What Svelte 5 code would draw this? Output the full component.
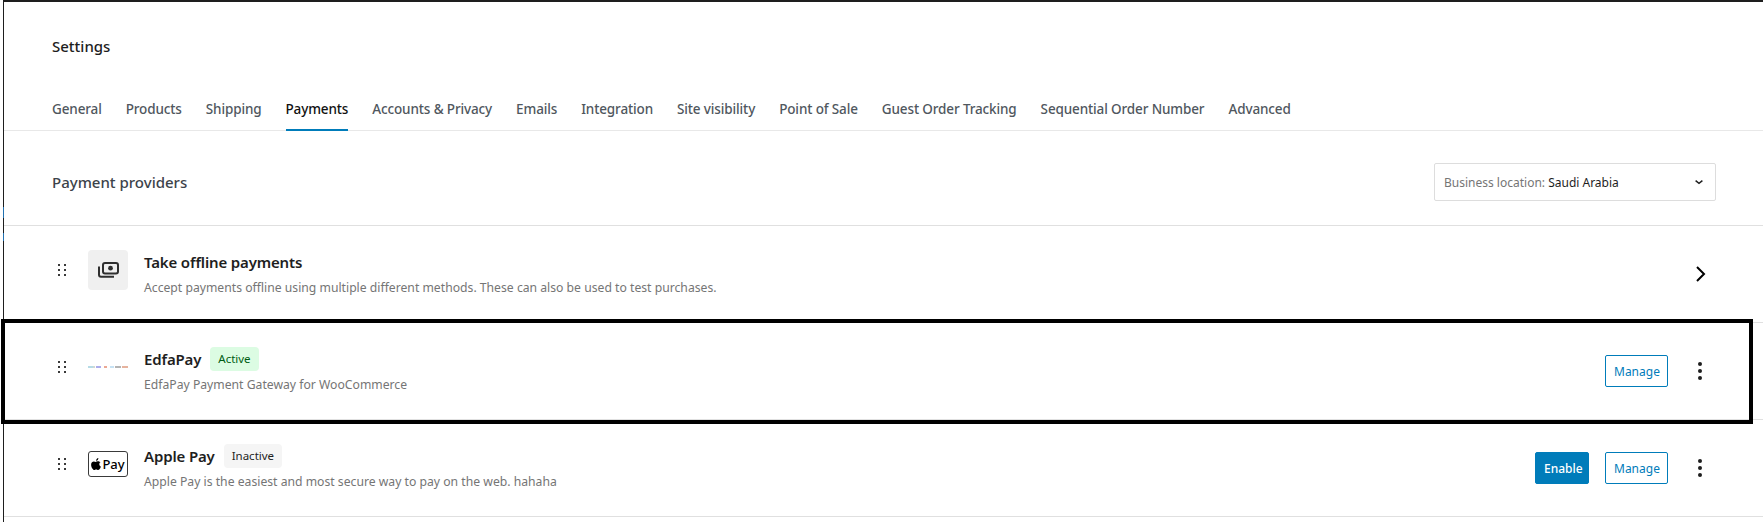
<script>
  const tabs = [
    'General', 'Products', 'Shipping', 'Payments', 'Accounts & Privacy', 'Emails',
    'Integration', 'Site visibility', 'Point of Sale', 'Guest Order Tracking',
    'Sequential Order Number', 'Advanced',
  ]
  const active = 'Payments'
  const edfaDashes = [
    ['#8fc7d8', 5], ['#b9c4b8', 2], ['transparent', 1], ['#7f7fe0', 5], ['transparent', 3],
    ['#e07a5a', 3], ['transparent', 3], ['#a9d2ee', 4], ['transparent', 1], ['#8c8c8c', 6],
    ['transparent', 1], ['#d98a6a', 6],
  ]
</script>

{#snippet handle()}
  <svg class="handle" width="20" height="20" viewBox="0 0 20 20" fill="#3a3a3a">
    <rect x="6" y="4" width="2" height="2" /><rect x="12" y="4" width="2" height="2" />
    <rect x="6" y="9" width="2" height="2" /><rect x="12" y="9" width="2" height="2" />
    <rect x="6" y="14" width="2" height="2" /><rect x="12" y="14" width="2" height="2" />
  </svg>
{/snippet}

{#snippet kebab()}
  <button class="icon-btn" aria-label="More">
    <svg width="24" height="24" viewBox="0 0 24 24" fill="#1e1e1e">
      <circle cx="12" cy="5" r="2" /><circle cx="12" cy="12" r="2" /><circle cx="12" cy="19" r="2" />
    </svg>
  </button>
{/snippet}

<div class="page">
  <header class="header"><h1>Settings</h1></header>

  <nav class="tabs">
    {#each tabs as tab}
      <span class="tab" class:active={tab === active}>{tab}</span>
    {/each}
  </nav>

  <section class="providers-head">
    <h2>Payment providers</h2>
    <div class="select">
      <span><span class="label">Business location:</span> Saudi Arabia</span>
      <svg width="14" height="14" viewBox="0 0 14 14" fill="none" stroke="#1e1e1e" stroke-width="1.4">
        <path d="M3.6 5.6 7 8.4l3.4-2.8" />
      </svg>
    </div>
  </section>

  <div class="row">
    {@render handle()}
    <div class="logo offline">
      <svg width="24" height="24" viewBox="0 0 24 24" fill="none" stroke="#2f2f2f" stroke-width="2">
        <rect x="7" y="5" width="15" height="10.5" rx="2" />
        <circle cx="14.5" cy="10.2" r="2.4" fill="#2f2f2f" stroke="none" />
        <path d="M3 8.5v8.2c0 1.2.8 2 2 2h13" />
      </svg>
    </div>
    <div class="info">
      <div class="title"><strong>Take offline payments</strong></div>
      <p>Accept payments offline using multiple different methods. These can also be used to test purchases.</p>
    </div>
    <div class="actions">
      <span class="icon-btn">
        <svg width="24" height="24" viewBox="0 0 24 24" fill="none" stroke="#000" stroke-width="2">
          <path d="m9 5 7 7-7 7" />
        </svg>
      </span>
    </div>
  </div>

  <div class="row">
    {@render handle()}
    <div class="logo edfa">
      {#each edfaDashes as [color, w]}
        <i style="background: {color}; width: {w}px"></i>
      {/each}
    </div>
    <div class="info">
      <div class="title"><strong>EdfaPay</strong><span class="badge on">Active</span></div>
      <p>EdfaPay Payment Gateway for WooCommerce</p>
    </div>
    <div class="actions">
      <button class="btn outline">Manage</button>
      {@render kebab()}
    </div>
  </div>

  <div class="row">
    {@render handle()}
    <div class="logo">
      <div class="apple">
        <svg width="10" height="12" viewBox="0 0 814 1000" fill="#000">
          <path d="M788 341c-6 4-108 62-108 190 0 148 130 200 134 202-1 3-21 72-69 142-43 62-88 124-156 124s-86-40-165-40c-77 0-104 41-167 41s-106-57-156-128C43 788 0 670 0 558c0-180 117-275 232-275 61 0 112 40 150 40 37 0 94-43 164-43 27 0 122 3 185 61zM554 159c29-34 50-82 50-130 0-7-1-13-2-19-47 2-104 32-138 71-27 30-52 78-52 127 0 8 1 15 2 18 3 0 8 1 13 1 43 0 96-29 127-68z" />
        </svg>
        <span>Pay</span>
      </div>
    </div>
    <div class="info">
      <div class="title"><strong>Apple Pay</strong><span class="badge off">Inactive</span></div>
      <p>Apple Pay is the easiest and most secure way to pay on the web. hahaha</p>
    </div>
    <div class="actions">
      <button class="btn primary">Enable</button>
      <button class="btn outline">Manage</button>
      {@render kebab()}
    </div>
  </div>
</div>

<!-- annotation drawn over the screenshot -->
<div class="highlight"></div>
<div class="edge-blue one"></div>
<div class="edge-blue two"></div>

<style>
  :global(body) {
    margin: 0;
    background: #fff;
    overflow: hidden;
  }

  .page {
    box-sizing: border-box;
    height: 522px;
    margin-left: 3px;
    border-top: 2px solid #1e1e1e;
    border-left: 1px solid #1e1e1e;
    background: #fff;
    font-family: "Noto Sans", "Open Sans", sans-serif;
    color: #1e1e1e;
    overflow: hidden;
  }

  .header {
    height: 62px;
    padding: 24px 0 0 48px;
    box-sizing: border-box;
  }

  h1 {
    margin: 0;
    font-size: 15px;
    line-height: 40px;
    font-weight: 500;
    color: #1e1e1e;
  }

  .tabs {
    display: flex;
    gap: 24px;
    height: 67px;
    padding-left: 48px;
    box-sizing: border-box;
    border-bottom: 1px solid #e8e8e8;
  }

  .tab {
    box-sizing: border-box;
    height: 67px;
    padding-top: 35px;
    font-size: 13.5px;
    letter-spacing: -0.13px;
    line-height: 20px;
    font-weight: 500;
    color: #50575e;
  }

  .tab.active {
    color: #111;
    border-bottom: 2px solid #007cba;
  }

  .providers-head {
    display: flex;
    align-items: center;
    justify-content: space-between;
    box-sizing: border-box;
    height: 95px;
    padding: 8px 47px 0 48px;
    border-bottom: 1px solid #e0e0e0;
  }

  h2 {
    margin: 0;
    font-size: 15px;
    font-weight: 500;
    color: #3c434a;
  }

  .select {
    display: flex;
    align-items: center;
    justify-content: space-between;
    box-sizing: border-box;
    width: 282px;
    height: 38px;
    padding: 0 9px;
    border: 1px solid #ddd;
    border-radius: 2px;
    font-size: 12px;
    color: #1e1e1e;
  }

  .label {
    color: #757575;
  }

  .row {
    display: flex;
    align-items: flex-start;
    box-sizing: border-box;
    height: 97px;
    padding: 24px 47px 0 48px;
    border-bottom: 1px solid #e0e0e0;
  }

  .handle {
    margin-top: 10px;
    margin-right: 16px;
    flex-shrink: 0;
  }

  .logo {
    display: flex;
    align-items: center;
    justify-content: center;
    width: 40px;
    height: 40px;
    margin-right: 16px;
    flex-shrink: 0;
  }

  .offline {
    background: #f0f0f0;
    border-radius: 4px;
  }

  .edfa {
    justify-content: flex-start;
  }

  .edfa i {
    display: block;
    height: 2px;
    opacity: 0.65;
  }

  .apple {
    display: flex;
    align-items: center;
    justify-content: center;
    gap: 1px;
    box-sizing: border-box;
    width: 40px;
    height: 26px;
    border: 1px solid #3a3a3a;
    border-radius: 3px;
    font-size: 13px;
    font-weight: 500;
    color: #000;
  }

  .info {
    flex: 1;
    min-width: 0;
  }

  .title {
    display: flex;
    align-items: center;
    gap: 9px;
    height: 24px;
  }

  strong {
    font-size: 15px;
    font-weight: 600;
    letter-spacing: -0.15px;
    color: #1e1e1e;
  }

  p {
    margin: 4px 0 0;
    font-size: 12.2px;
    line-height: 20px;
    color: #757575;
  }

  .badge {
    box-sizing: border-box;
    height: 24px;
    padding: 0 8px;
    border-radius: 4px;
    font-size: 11.5px;
    line-height: 24px;
  }

  .badge.on {
    background: #dcfce3;
    color: #005c12;
  }

  .badge.off {
    background: #f5f5f5;
    color: #1e1e1e;
  }

  .actions {
    display: flex;
    align-items: center;
    gap: 16px;
    height: 32px;
    margin-top: 8px;
  }

  .btn {
    box-sizing: border-box;
    height: 32px;
    padding: 0 8px;
    border-radius: 2px;
    font-family: inherit;
    font-size: 12px;
    cursor: pointer;
  }

  .btn.outline {
    width: 63px;
    background: #fff;
    border: 1px solid #007cba;
    color: #007cba;
  }

  .btn.primary {
    width: 54px;
    background: #007cba;
    border: 1px solid #007cba;
    color: #fff;
    font-weight: 500;
  }

  .icon-btn {
    display: flex;
    align-items: center;
    justify-content: center;
    width: 32px;
    height: 32px;
    padding: 0;
    border: none;
    background: none;
  }

  .highlight {
    position: absolute;
    left: 1px;
    top: 319px;
    width: 1752px;
    height: 105px;
    box-sizing: border-box;
    border: 4px solid #000;
  }

  .edge-blue {
    position: absolute;
    left: 3px;
    width: 1px;
    background: #2271b1;
  }

  .edge-blue.one {
    top: 207px;
    height: 11px;
  }

  .edge-blue.two {
    top: 233px;
    height: 8px;
  }
</style>
